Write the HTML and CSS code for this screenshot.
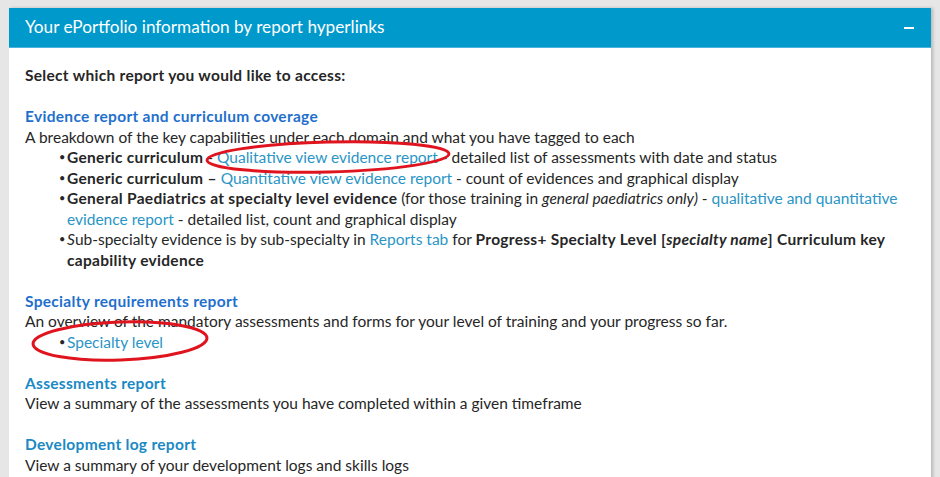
FILE: index.html
```html
<!DOCTYPE html>
<html lang="en">
<head>
    <meta charset="UTF-8">
    <meta name="viewport" content="width=device-width, initial-scale=1.0">
    <title>Your ePortfolio information by report hyperlinks</title>
    <link rel="stylesheet" href="styles.css">
</head>
<body>
    <div class="panel">
        <div class="panel-header">
            <span class="panel-title">Your ePortfolio information by report hyperlinks</span>
            <span class="collapse"></span>
        </div>
        <div class="panel-body">
            <p class="intro">Select which report you would like to access:</p>

            <div class="section">
                <h4 class="heading royal">Evidence report and curriculum coverage</h4>
                <p>A breakdown of the key capabilities under each domain and what you have tagged to each</p>
                <ul>
                    <li><b>Generic curriculum</b> - <a href="#">Qualitative view evidence report</a> - detailed list of assessments with date and status</li>
                    <li><b>Generic curriculum &ndash;</b> <a href="#">Quantitative view evidence report</a> - count of evidences and graphical display</li>
                    <li><b>General Paediatrics at specialty level evidence</b> (for those training in <i>general paediatrics only)</i> - <a href="#">qualitative and quantitative evidence report</a> - detailed list, count and graphical display</li>
                    <li><i>S</i>ub-specialty evidence is by sub-specialty in <a href="#">Reports tab</a> for <b>Progress+ Specialty Level [<i>specialty name</i>] Curriculum key capability evidence</b></li>
                </ul>
            </div>

            <div class="section">
                <h4 class="heading royal">Specialty requirements report</h4>
                <p>An overview of the mandatory assessments and forms for your level of training and your progress so far.</p>
                <ul>
                    <li><a href="#">Specialty level</a></li>
                </ul>
            </div>

            <div class="section">
                <h4 class="heading">Assessments report</h4>
                <p>View a summary of the assessments you have completed within a given timeframe</p>
            </div>

            <div class="section">
                <h4 class="heading">Development log report</h4>
                <p>View a summary of your development logs and skills logs</p>
            </div>
        </div>

        <!-- red annotation rings drawn over the screenshot -->
        <svg class="ring ring-one" width="250" height="36" viewBox="0 0 250 36">
            <ellipse cx="125" cy="18" rx="121" ry="15" fill="none" stroke="#e0141e" stroke-width="3" transform="rotate(-1.5 125 18)"/>
        </svg>
        <svg class="ring ring-two" width="182" height="44" viewBox="0 0 182 44">
            <ellipse cx="91" cy="22" rx="87" ry="19" fill="none" stroke="#e0141e" stroke-width="3" transform="rotate(-2 91 22)"/>
        </svg>
    </div>
</body>
</html>
```

FILE: styles.css
```css
body {
    margin: 0;
    padding: 8px 9px 0 9px;
    background-color: #e6e6e6;
    font-family: Lato, "Open Sans", Arial, sans-serif;
    font-size: 15.5px;
    line-height: 20.5px;
    color: #262626;
}
.panel {
    position: relative;
    background: white;
    box-shadow: 2px 0 3px rgba(0, 0, 0, 0.2);
    height: 480px;
}
.panel-header {
    display: flex;
    align-items: center;
    justify-content: space-between;
    height: 39px;
    padding: 0 17px 0 16px;
    background-color: #0099cc;
    border-bottom: 1px solid #4cb4dc;
    color: white;
}
.panel-title {
    font-size: 17.2px;
}
.collapse {
    width: 10px;
    height: 2px;
    background: white;
}
.panel-body {
    padding: 17px 16px 0 16px;
}
p {
    margin: 0;
}
b {
    letter-spacing: 0.3px;
}
.intro {
    font-weight: bold;
    letter-spacing: 0.3px;
    margin-bottom: 20.5px;
}
.section {
    margin-bottom: 20.5px;
}
.heading {
    margin: 0;
    font-size: 15.5px;
    font-weight: bold;
    letter-spacing: 0.3px;
    color: #1a89c4;
}
.heading.royal {
    color: #1f70cc;
}
ul {
    margin: 0;
    padding-left: 42px;
    list-style: none;
}
li {
    position: relative;
}
li::before {
    content: "\2022";
    position: absolute;
    left: -8px;
    font-size: 11px;
}
a {
    color: #2a95c6;
    text-decoration: none;
}
.ring {
    position: absolute;
}
.ring-one {
    left: 194px;
    top: 131px;
}
.ring-two {
    left: 20px;
    top: 311px;
}
```
